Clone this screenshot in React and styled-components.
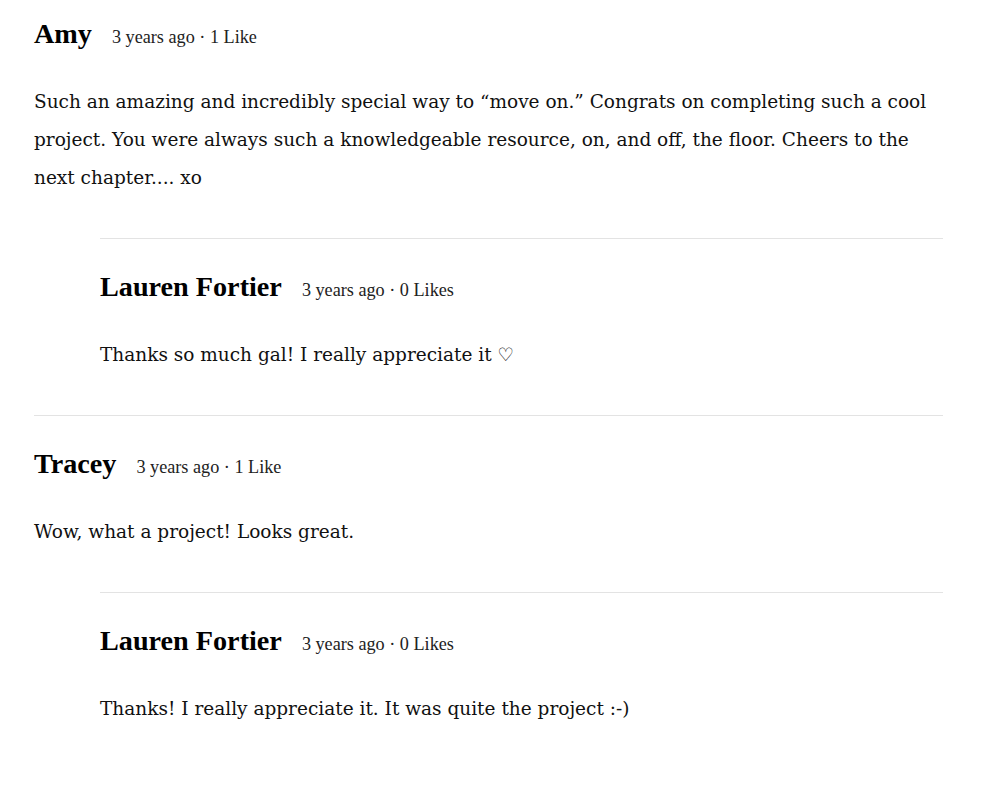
import React from "react";
import styled, { createGlobalStyle } from "styled-components";

const Global = createGlobalStyle`
  html, body { margin: 0; padding: 0; background: #fff; }
  body { font-family: "DejaVu Serif", "Liberation Serif", serif; color: #111; }
`;

const Page = styled.main`
  width: 909px;
  padding: 14px 0 40px 34px;
`;

const Comment = styled.article`
  margin-left: ${(p) => (p.$reply ? "66px" : "0")};
  border-top: ${(p) => (p.$first ? "none" : "1px solid #e3e3e3")};
  padding-top: ${(p) => (p.$first ? "0" : "28px")};
  padding-bottom: 41px;
`;

const Header = styled.header`
  display: flex;
  align-items: baseline;
  gap: 20px;
  height: 40px;
`;

const Name = styled.h3`
  margin: 0;
  font-family: "Liberation Serif", serif;
  font-weight: 700;
  font-size: 28.2px;
  line-height: 40px;
  color: #000;
`;

const Meta = styled.span`
  font-family: "Liberation Serif", serif;
  font-size: 18.2px;
  color: #222;
`;

const Body = styled.p`
  margin: 29px 0 0;
  font-size: 18.5px;
  line-height: 38px;
  color: #111;
`;

const comments = [
  {
    name: "Amy",
    meta: "3 years ago · 1 Like",
    text: "Such an amazing and incredibly special way to \u201cmove on.\u201d Congrats on completing such a cool project. You were always such a knowledgeable resource, on, and off, the floor. Cheers to the next chapter.... xo",
    replies: [
      {
        name: "Lauren Fortier",
        meta: "3 years ago · 0 Likes",
        text: "Thanks so much gal! I really appreciate it \u2661",
      },
    ],
  },
  {
    name: "Tracey",
    meta: "3 years ago · 1 Like",
    text: "Wow, what a project! Looks great.",
    replies: [
      {
        name: "Lauren Fortier",
        meta: "3 years ago · 0 Likes",
        text: "Thanks! I really appreciate it. It was quite the project :-)",
      },
    ],
  },
];

function Entry({ c, reply, first }) {
  return (
    <Comment $reply={reply} $first={first}>
      <Header>
        <Name>{c.name}</Name>
        <Meta>{c.meta}</Meta>
      </Header>
      <Body>{c.text}</Body>
    </Comment>
  );
}

export default function App() {
  return (
    <>
      <Global />
      <Page>
        {comments.map((c, i) => (
          <React.Fragment key={i}>
            <Entry c={c} first={i === 0} />
            {c.replies.map((r, j) => (
              <Entry key={j} c={r} reply />
            ))}
          </React.Fragment>
        ))}
      </Page>
    </>
  );
}
